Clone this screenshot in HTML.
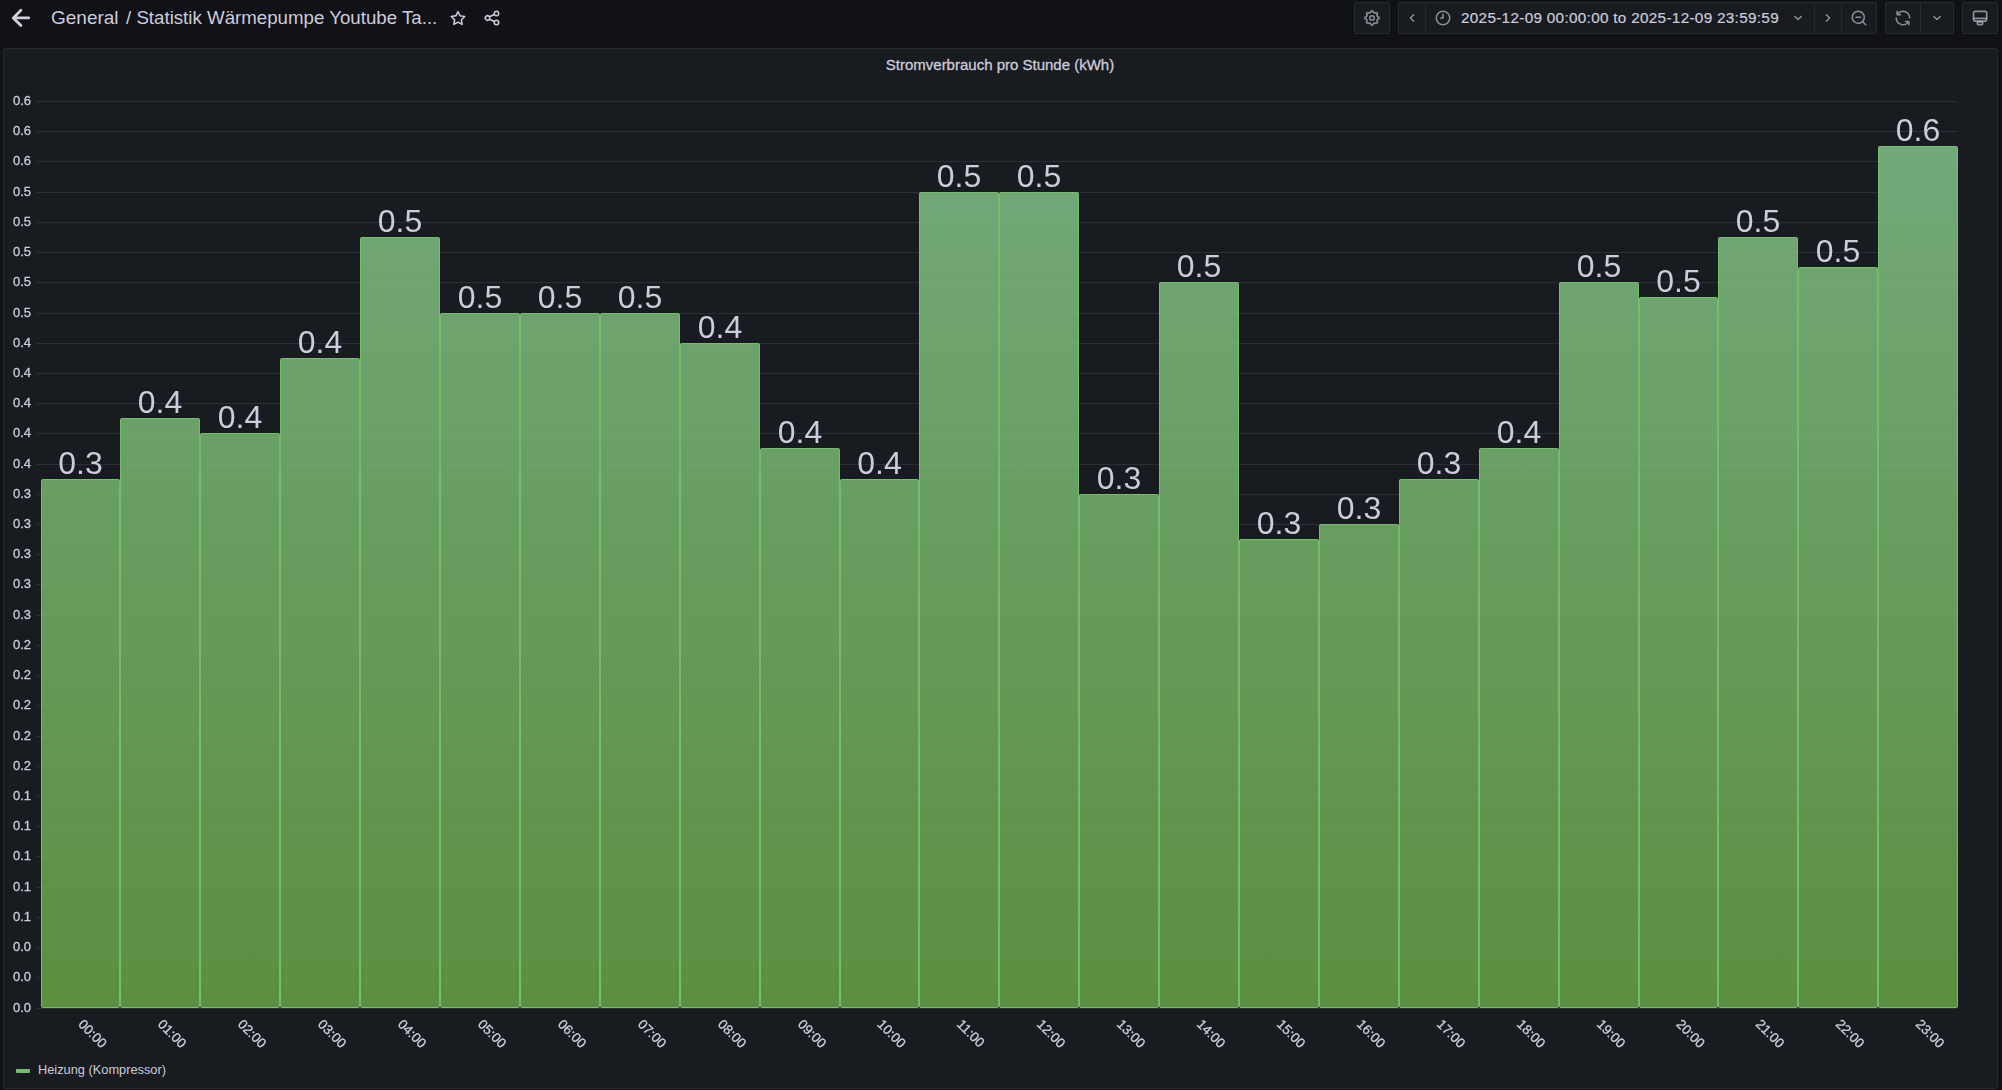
<!DOCTYPE html>
<html><head><meta charset="utf-8">
<style>
html,body{margin:0;padding:0}
body{width:2002px;height:1090px;background:#111217;overflow:hidden;position:relative;font-family:"Liberation Sans",sans-serif;color:#ccccdc}
.a{position:absolute}
.btn{position:absolute;top:2px;height:30px;background:#181b1f;border:1px solid rgba(204,204,220,0.085);border-radius:2px;box-sizing:content-box}
.div{position:absolute;top:0;width:1px;height:30px;background:rgba(204,204,220,0.085)}
svg.ic{position:absolute;fill:rgba(204,204,220,0.65)}
.panel{position:absolute;left:3px;top:48px;width:1993px;height:1039px;background:#181b1f;border:1px solid rgba(204,204,220,0.085);border-radius:3px}
svg.ch{position:absolute;left:0;top:0;will-change:transform}
.g{stroke:rgba(240,250,255,0.09);stroke-width:1}
.yl{font-size:13px;fill:#ccccdc;stroke:#ccccdc;stroke-width:0.3px;text-anchor:end}
.vl{font-size:32px;fill:#ccccdc;text-anchor:middle}
.xl{font-size:13.5px;fill:#ccccdc;stroke:#ccccdc;stroke-width:0.3px}
</style></head><body>
<!-- header -->
<svg class="a" style="left:0;top:0" width="40" height="36" viewBox="0 0 40 36"><path d="M20.9 10.3 L13.3 17.9 L20.9 25.5 M13.6 17.9 H28.7" fill="none" stroke="#d0d0dd" stroke-width="2.8" stroke-linecap="round" stroke-linejoin="round"/></svg>
<div class="a" style="left:51px;top:7px;font-size:19px;line-height:22px;white-space:nowrap">General</div>
<div class="a" style="left:126px;top:7px;font-size:18.7px;line-height:22px;white-space:nowrap">/ Statistik Wärmepumpe Youtube Ta...</div>
<svg class="ic" style="left:449px;top:9px;fill:#ccccdc" width="18" height="18" viewBox="0 0 24 24"><path d="M22,9.67A1,1,0,0,0,21.14,9l-5.69-.83L12.9,3a1,1,0,0,0-1.8,0L8.550,8.16,2.86,9a1,1,0,0,0-.81.68,1,1,0,0,0,.25,1l4.130,4-1,5.68A1,1,0,0,0,6.9,21.44L12,18.77l5.1,2.67a.93.93,0,0,0,.46.12,1,1,0,0,0,.59-.19,1,1,0,0,0,.4-1l-1-5.68,4.13-4A1,1,0,0,0,22,9.67Zm-6.15,4a1,1,0,0,0-.29.88l.72,4.2-3.76-2a1.06,1.06,0,0,0-.94,0l-3.76,2,.72-4.2a1,1,0,0,0-.29-.88l-3-3,4.21-.61a1,1,0,0,0,.76-.55L12,5.7l1.88,3.82a1,1,0,0,0,.76.55l4.210.61Z"/></svg>
<svg class="ic" style="left:483px;top:9px;fill:#ccccdc" width="18" height="18" viewBox="0 0 24 24"><path d="M18,14a4,4,0,0,0-3.08,1.48l-5.1-2.35a3.64,3.64,0,0,0,0-2.26l5.1-2.350A4,4,0,1,0,14,6a4.170,4.170,0,0,0,.07.71L8.79,9.14a4,4,0,1,0,0,5.72l5.28,2.43A4.17,4.17,0,0,0,14,18a4,4,0,1,0,4-4ZM18,4a2,2,0,1,1-2,2A2,2,0,0,1,18,4ZM6,14a2,2,0,1,1,2-2A2,2,0,0,1,6,14Zm12,6a2,2,0,1,1,2-2A2,2,0,0,1,18,20Z"/></svg>

<!-- toolbar -->
<div class="btn" style="left:1354px;width:34px">
 <svg class="a" style="left:-1px;top:-1px" width="36" height="32" viewBox="0 0 36 32"><g fill="none" stroke="rgba(204,204,220,0.65)" stroke-width="1.5" stroke-linejoin="round"><path d="M16.65 10.57L17.03 9.07A7.0 7.0 0 0 1 18.97 9.07L19.35 10.57A5.6 5.6 0 0 1 20.88 11.20L22.21 10.41A7.0 7.0 0 0 1 23.59 11.79L22.80 13.12A5.6 5.6 0 0 1 23.43 14.65L24.93 15.03A7.0 7.0 0 0 1 24.93 16.97L23.43 17.35A5.6 5.6 0 0 1 22.80 18.88L23.59 20.21A7.0 7.0 0 0 1 22.21 21.59L20.88 20.80A5.6 5.6 0 0 1 19.35 21.43L18.97 22.93A7.0 7.0 0 0 1 17.03 22.93L16.65 21.43A5.6 5.6 0 0 1 15.12 20.80L13.79 21.59A7.0 7.0 0 0 1 12.41 20.21L13.20 18.88A5.6 5.6 0 0 1 12.57 17.35L11.07 16.97A7.0 7.0 0 0 1 11.07 15.03L12.57 14.65A5.6 5.6 0 0 1 13.20 13.12L12.41 11.79A7.0 7.0 0 0 1 13.79 10.41L15.12 11.20A5.6 5.6 0 0 1 16.65 10.57Z"/><circle cx="18" cy="16" r="2.3"/></g></svg>
</div>
<div class="btn" style="left:1398px;width:477px">
 <svg class="ic" style="left:4px;top:6px" width="18" height="18" viewBox="0 0 24 24"><path d="M11.29,12l3.54-3.54a1,1,0,0,0,0-1.41,1,1,0,0,0-1.42,0L9.17,11.29a1,1,0,0,0,0,1.42L13.41,17a1,1,0,0,0,.71.29,1,1,0,0,0,.71-.29,1,1,0,0,0,0-1.41Z"/></svg>
 <div class="div" style="left:26px"></div>
 <svg class="ic" style="left:34.5px;top:6.2px" width="18" height="18" viewBox="0 0 24 24"><path d="M12,2A10,10,0,1,0,22,12,10,10,0,0,0,12,2Zm0,18a8,8,0,1,1,8-8A8,8,0,0,1,12,20ZM12,6a1,1,0,0,0-1,1v4H9a1,1,0,0,0,0,2h3a1,1,0,0,0,1-1V7A1,1,0,0,0,12,6Z"/></svg>
 <div class="a" style="left:62px;top:5.6px;font-size:15.3px;line-height:17px;letter-spacing:0.3px;-webkit-text-stroke:0.2px #ccccdc;white-space:nowrap;color:#ccccdc">2025-12-09 00:00:00 to 2025-12-09 23:59:59</div>
 <svg class="ic" style="left:390px;top:6px" width="18" height="18" viewBox="0 0 24 24"><path d="M17,9.17a1,1,0,0,0-1.41,0L12,12.71,8.46,9.170a1,1,0,0,0-1.41,0,1,1,0,0,0,0,1.42l4.24,4.24a1,1,0,0,0,1.42,0L17,10.59A1,1,0,0,0,17,9.17Z"/></svg>
 <div class="div" style="left:415px"></div>
 <svg class="ic" style="left:420px;top:6px" width="18" height="18" viewBox="0 0 24 24"><path d="M14.83,11.29,10.59,7.05a1,1,0,0,0-1.42,0,1,1,0,0,0,0,1.41L12.71,12,9.17,15.54a1,1,0,0,0,0,1.41,1,1,0,0,0,.71.29,1,1,0,0,0,.71-.29l4.24-4.24A1,1,0,0,0,14.83,11.29Z"/></svg>
 <div class="div" style="left:442px"></div>
 <svg class="ic" style="left:451px;top:6px" width="18" height="18" viewBox="0 0 24 24"><path d="M21.71,20.29,18,16.61A9,9,0,1,0,16.610,18l3.68,3.68a1,1,0,0,0,1.42,0A1,1,0,0,0,21.71,20.29ZM11,18a7,7,0,1,1,7-7A7,7,0,0,1,11,18Zm3-8H8a1,1,0,0,0,0,2h6a1,1,0,0,0,0-2Z"/></svg>
</div>
<div class="btn" style="left:1885px;width:67px">
 <svg class="ic" style="left:8px;top:6px" width="18" height="18" viewBox="0 0 24 24"><path d="M19.91,15.51H15.38a1,1,0,0,0,0,2h2.4A8,8,0,0,1,4,12a1,1,0,0,0-2,0,10,10,0,0,0,16.88,7.23V21a1,1,0,0,0,2,0V16.5A1,1,0,0,0,19.91,15.51ZM12,2A10,10,0,0,0,5.12,4.77V3a1,1,0,0,0-2,0V7.5a1,1,0,0,0,1,1h4.5a1,1,0,0,0,0-2H6.22A8,8,0,0,1,20,12a1,1,0,0,0,2,0A10,10,0,0,0,12,2Z"/></svg>
 <div class="div" style="left:34px"></div>
 <svg class="ic" style="left:42px;top:6px" width="18" height="18" viewBox="0 0 24 24"><path d="M17,9.17a1,1,0,0,0-1.41,0L12,12.71,8.46,9.170a1,1,0,0,0-1.41,0,1,1,0,0,0,0,1.42l4.24,4.24a1,1,0,0,0,1.42,0L17,10.59A1,1,0,0,0,17,9.17Z"/></svg>
</div>
<div class="btn" style="left:1962px;width:34px">
 <svg class="a" style="left:-1px;top:-1px" width="36" height="32" viewBox="0 0 36 32"><g fill="none" stroke="rgba(204,204,220,0.65)" stroke-width="1.7"><rect x="11.5" y="9.3" width="13.2" height="9.8" rx="2"/><path d="M11.5 16.4 H24.7"/><rect x="15.2" y="19.9" width="5.6" height="2.8" rx="1.4"/></g></svg>
</div>

<!-- panel -->
<div class="panel"></div>
<div class="a" style="width:2002px;left:-1px;top:56px;text-align:center;font-size:15px;-webkit-text-stroke:0.3px #ccccdc;line-height:18px;white-space:nowrap">Stromverbrauch pro Stunde (kWh)</div>
<div class="a" style="left:16px;top:1069px;width:14px;height:4px;background:#73bf69;border-radius:1px"></div>
<div class="a" style="left:38px;top:1062px;font-size:12.8px;line-height:15px;white-space:nowrap">Heizung (Kompressor)</div>
<svg class="ch" width="2002" height="1090" viewBox="0 0 2002 1090">
<defs><linearGradient id="gr" gradientUnits="userSpaceOnUse" x1="0" y1="101.4" x2="0" y2="1007.6"><stop offset="0" stop-color="rgb(140,206,149)" stop-opacity="0.8"/><stop offset="1" stop-color="rgb(109,172,73)" stop-opacity="0.8"/></linearGradient></defs>
<line x1="36" x2="1957.5" y1="101.5" y2="101.5" class="g"/>
<line x1="36" x2="1957.5" y1="131.5" y2="131.5" class="g"/>
<line x1="36" x2="1957.5" y1="161.5" y2="161.5" class="g"/>
<line x1="36" x2="1957.5" y1="192.5" y2="192.5" class="g"/>
<line x1="36" x2="1957.5" y1="222.5" y2="222.5" class="g"/>
<line x1="36" x2="1957.5" y1="252.5" y2="252.5" class="g"/>
<line x1="36" x2="1957.5" y1="282.5" y2="282.5" class="g"/>
<line x1="36" x2="1957.5" y1="313.5" y2="313.5" class="g"/>
<line x1="36" x2="1957.5" y1="343.5" y2="343.5" class="g"/>
<line x1="36" x2="1957.5" y1="373.5" y2="373.5" class="g"/>
<line x1="36" x2="1957.5" y1="403.5" y2="403.5" class="g"/>
<line x1="36" x2="1957.5" y1="433.5" y2="433.5" class="g"/>
<line x1="36" x2="1957.5" y1="464.5" y2="464.5" class="g"/>
<line x1="36" x2="1957.5" y1="494.5" y2="494.5" class="g"/>
<line x1="36" x2="1957.5" y1="524.5" y2="524.5" class="g"/>
<line x1="36" x2="1957.5" y1="554.5" y2="554.5" class="g"/>
<line x1="36" x2="1957.5" y1="584.5" y2="584.5" class="g"/>
<line x1="36" x2="1957.5" y1="615.5" y2="615.5" class="g"/>
<line x1="36" x2="1957.5" y1="645.5" y2="645.5" class="g"/>
<line x1="36" x2="1957.5" y1="675.5" y2="675.5" class="g"/>
<line x1="36" x2="1957.5" y1="705.5" y2="705.5" class="g"/>
<line x1="36" x2="1957.5" y1="736.5" y2="736.5" class="g"/>
<line x1="36" x2="1957.5" y1="766.5" y2="766.5" class="g"/>
<line x1="36" x2="1957.5" y1="796.5" y2="796.5" class="g"/>
<line x1="36" x2="1957.5" y1="826.5" y2="826.5" class="g"/>
<line x1="36" x2="1957.5" y1="856.5" y2="856.5" class="g"/>
<line x1="36" x2="1957.5" y1="887.5" y2="887.5" class="g"/>
<line x1="36" x2="1957.5" y1="917.5" y2="917.5" class="g"/>
<line x1="36" x2="1957.5" y1="947.5" y2="947.5" class="g"/>
<line x1="36" x2="1957.5" y1="977.5" y2="977.5" class="g"/>
<line x1="36" x2="1957.5" y1="1008.5" y2="1008.5" class="g"/>
<text x="31" y="104.80" class="yl">0.6</text>
<text x="31" y="134.80" class="yl">0.6</text>
<text x="31" y="164.80" class="yl">0.6</text>
<text x="31" y="195.80" class="yl">0.5</text>
<text x="31" y="225.80" class="yl">0.5</text>
<text x="31" y="255.80" class="yl">0.5</text>
<text x="31" y="285.80" class="yl">0.5</text>
<text x="31" y="316.80" class="yl">0.5</text>
<text x="31" y="346.80" class="yl">0.4</text>
<text x="31" y="376.80" class="yl">0.4</text>
<text x="31" y="406.80" class="yl">0.4</text>
<text x="31" y="436.80" class="yl">0.4</text>
<text x="31" y="467.80" class="yl">0.4</text>
<text x="31" y="497.80" class="yl">0.3</text>
<text x="31" y="527.80" class="yl">0.3</text>
<text x="31" y="557.80" class="yl">0.3</text>
<text x="31" y="587.80" class="yl">0.3</text>
<text x="31" y="618.80" class="yl">0.3</text>
<text x="31" y="648.80" class="yl">0.2</text>
<text x="31" y="678.80" class="yl">0.2</text>
<text x="31" y="708.80" class="yl">0.2</text>
<text x="31" y="739.80" class="yl">0.2</text>
<text x="31" y="769.80" class="yl">0.2</text>
<text x="31" y="799.80" class="yl">0.1</text>
<text x="31" y="829.80" class="yl">0.1</text>
<text x="31" y="859.80" class="yl">0.1</text>
<text x="31" y="890.80" class="yl">0.1</text>
<text x="31" y="920.80" class="yl">0.1</text>
<text x="31" y="950.80" class="yl">0.0</text>
<text x="31" y="980.80" class="yl">0.0</text>
<text x="31" y="1011.80" class="yl">0.0</text>
<g fill="url(#gr)" stroke="#73bf69" stroke-width="1" rx="1"><rect rx="1" x="41.5" y="479.5" width="78" height="528"/><rect rx="1" x="120.5" y="418.5" width="79" height="589"/><rect rx="1" x="200.5" y="433.5" width="79" height="574"/><rect rx="1" x="280.5" y="358.5" width="79" height="649"/><rect rx="1" x="360.5" y="237.5" width="79" height="770"/><rect rx="1" x="440.5" y="313.5" width="79" height="694"/><rect rx="1" x="520.5" y="313.5" width="79" height="694"/><rect rx="1" x="600.5" y="313.5" width="79" height="694"/><rect rx="1" x="680.5" y="343.5" width="79" height="664"/><rect rx="1" x="760.5" y="448.5" width="79" height="559"/><rect rx="1" x="840.5" y="479.5" width="78" height="528"/><rect rx="1" x="919.5" y="192.5" width="79" height="815"/><rect rx="1" x="999.5" y="192.5" width="79" height="815"/><rect rx="1" x="1079.5" y="494.5" width="79" height="513"/><rect rx="1" x="1159.5" y="282.5" width="79" height="725"/><rect rx="1" x="1239.5" y="539.5" width="79" height="468"/><rect rx="1" x="1319.5" y="524.5" width="79" height="483"/><rect rx="1" x="1399.5" y="479.5" width="79" height="528"/><rect rx="1" x="1479.5" y="448.5" width="79" height="559"/><rect rx="1" x="1559.5" y="282.5" width="79" height="725"/><rect rx="1" x="1639.5" y="297.5" width="78" height="710"/><rect rx="1" x="1718.5" y="237.5" width="79" height="770"/><rect rx="1" x="1798.5" y="267.5" width="79" height="740"/><rect rx="1" x="1878.5" y="146.5" width="79" height="861"/></g>
<text x="80.50" y="473.90" class="vl">0.3</text>
<text x="160.00" y="412.90" class="vl">0.4</text>
<text x="240.00" y="427.90" class="vl">0.4</text>
<text x="320.00" y="352.90" class="vl">0.4</text>
<text x="400.00" y="231.90" class="vl">0.5</text>
<text x="480.00" y="307.90" class="vl">0.5</text>
<text x="560.00" y="307.90" class="vl">0.5</text>
<text x="640.00" y="307.90" class="vl">0.5</text>
<text x="720.00" y="337.90" class="vl">0.4</text>
<text x="800.00" y="442.90" class="vl">0.4</text>
<text x="879.50" y="473.90" class="vl">0.4</text>
<text x="959.00" y="186.90" class="vl">0.5</text>
<text x="1039.00" y="186.90" class="vl">0.5</text>
<text x="1119.00" y="488.90" class="vl">0.3</text>
<text x="1199.00" y="276.90" class="vl">0.5</text>
<text x="1279.00" y="533.90" class="vl">0.3</text>
<text x="1359.00" y="518.90" class="vl">0.3</text>
<text x="1439.00" y="473.90" class="vl">0.3</text>
<text x="1519.00" y="442.90" class="vl">0.4</text>
<text x="1599.00" y="276.90" class="vl">0.5</text>
<text x="1678.50" y="291.90" class="vl">0.5</text>
<text x="1758.00" y="231.90" class="vl">0.5</text>
<text x="1838.00" y="261.90" class="vl">0.5</text>
<text x="1918.00" y="140.90" class="vl">0.6</text>
<text transform="translate(77.50,1025) rotate(45)" class="xl">00:00</text>
<text transform="translate(157.00,1025) rotate(45)" class="xl">01:00</text>
<text transform="translate(237.00,1025) rotate(45)" class="xl">02:00</text>
<text transform="translate(317.00,1025) rotate(45)" class="xl">03:00</text>
<text transform="translate(397.00,1025) rotate(45)" class="xl">04:00</text>
<text transform="translate(477.00,1025) rotate(45)" class="xl">05:00</text>
<text transform="translate(557.00,1025) rotate(45)" class="xl">06:00</text>
<text transform="translate(637.00,1025) rotate(45)" class="xl">07:00</text>
<text transform="translate(717.00,1025) rotate(45)" class="xl">08:00</text>
<text transform="translate(797.00,1025) rotate(45)" class="xl">09:00</text>
<text transform="translate(876.50,1025) rotate(45)" class="xl">10:00</text>
<text transform="translate(956.00,1025) rotate(45)" class="xl">11:00</text>
<text transform="translate(1036.00,1025) rotate(45)" class="xl">12:00</text>
<text transform="translate(1116.00,1025) rotate(45)" class="xl">13:00</text>
<text transform="translate(1196.00,1025) rotate(45)" class="xl">14:00</text>
<text transform="translate(1276.00,1025) rotate(45)" class="xl">15:00</text>
<text transform="translate(1356.00,1025) rotate(45)" class="xl">16:00</text>
<text transform="translate(1436.00,1025) rotate(45)" class="xl">17:00</text>
<text transform="translate(1516.00,1025) rotate(45)" class="xl">18:00</text>
<text transform="translate(1596.00,1025) rotate(45)" class="xl">19:00</text>
<text transform="translate(1675.50,1025) rotate(45)" class="xl">20:00</text>
<text transform="translate(1755.00,1025) rotate(45)" class="xl">21:00</text>
<text transform="translate(1835.00,1025) rotate(45)" class="xl">22:00</text>
<text transform="translate(1915.00,1025) rotate(45)" class="xl">23:00</text>
</svg>
</body></html>
